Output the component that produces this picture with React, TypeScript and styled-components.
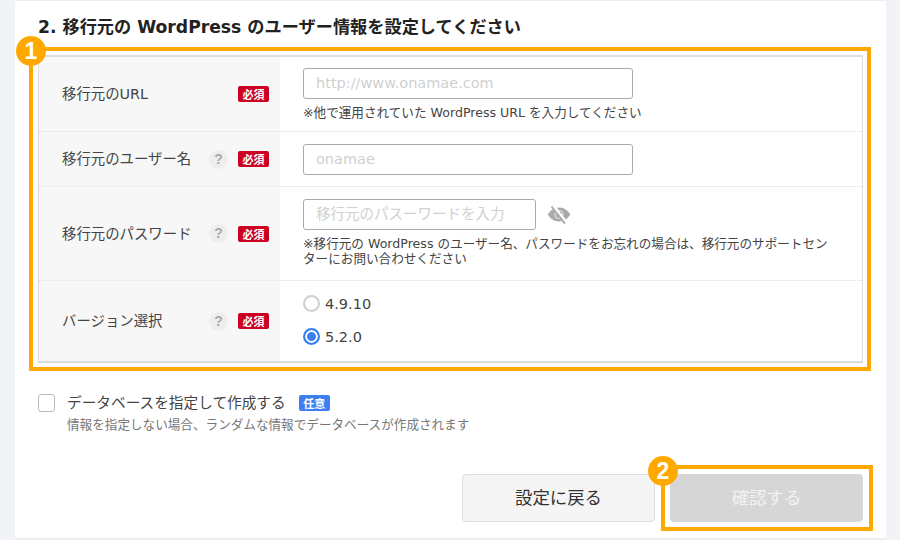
import React from 'react';
import styled, { createGlobalStyle } from 'styled-components';

const orange = '#ffa800';

const GlobalStyle = createGlobalStyle`
  html, body {
    margin: 0;
    padding: 0;
    background: #f1f3f7;
  }
  body {
    font-family: "DejaVu Sans", "Noto Sans CJK JP", sans-serif;
    color: #333;
  }
  * {
    box-sizing: border-box;
  }
`;

const Panel = styled.main`
  width: 871px;
  height: 540px;
  margin-left: 15px;
  padding: 14px 15px 0 14px;
  background: #fff;
  border-top: 1px solid #eeeeee;
  border-bottom: 2px solid #eeeeee;
`;

const Heading = styled.h2`
  margin: 0 0 8px 9px;
  font-size: 17.2px;
  line-height: 24px;
  font-weight: 700;
  color: #222;
`;

const Highlight = styled.div`
  position: relative;
  border: 4px solid ${orange};
`;

const FormFrame = styled(Highlight)`
  width: 842px;
  padding: 4px 4px 4px 5px;
`;

const StepBadge = styled.span<{ $left: number; $top: number }>`
  position: absolute;
  left: ${p => p.$left}px;
  top: ${p => p.$top}px;
  width: 30px;
  height: 30px;
  border-radius: 50%;
  background: ${orange};
  color: #fff;
  font: 700 23px/30px "Liberation Sans", sans-serif;
  text-align: center;
`;

const Table = styled.div`
  border: 1px solid #dddddd;
  border-top-width: 2px;
  border-bottom-width: 2px;
`;

const Row = styled.div<{ $height: number }>`
  display: grid;
  grid-template-columns: 241px 1fr;
  height: ${p => p.$height}px;
  border-bottom: 1px dotted #d9d9d9;

  &:last-child {
    border-bottom: 0;
  }
`;

const LabelCell = styled.div`
  display: flex;
  align-items: center;
  padding: 0 11px 0 23px;
  background: #f7f7f7;
`;

const LabelText = styled.span`
  flex: 1;
  padding-bottom: 3px;
  font-size: 14.4px;
  color: #444;
`;

const Help = styled.span`
  width: 19px;
  height: 19px;
  margin-right: 10px;
  border-radius: 50%;
  background: #eeeeee;
  color: #aaa;
  font: 700 14px/19px "Liberation Sans", sans-serif;
  text-align: center;
`;

const Required = styled.span`
  width: 31px;
  height: 16px;
  border-radius: 2px;
  background: #cc0022;
  color: #fff;
  font: 700 11px/16px "Noto Sans CJK JP", sans-serif;
  text-align: center;
`;

const FieldCell = styled.div<{ $top: number }>`
  padding: ${p => p.$top}px 30px 0 23px;
`;

const InputLine = styled.div`
  display: flex;
  align-items: center;
  gap: 11px;
`;

const TextInput = styled.input<{ $width: number }>`
  display: block;
  width: ${p => p.$width}px;
  height: 31px;
  padding: 0 12px 2px;
  background: #fff;
  border: 1px solid #aaa;
  border-radius: 3px;
  font: 14.5px "DejaVu Sans", "Noto Sans CJK JP", sans-serif;
  outline: none;

  &::placeholder {
    color: #d0d0d0;
    opacity: 1;
  }
`;

const Note = styled.p`
  margin: 6px 0 0;
  font-size: 12.6px;
  line-height: 15px;
  color: #444;
`;

const RadioLine = styled.label`
  display: flex;
  align-items: center;
  gap: 5px;
  height: 17px;
  font-size: 14.5px;
  color: #444;

  & + & {
    margin-top: 16px;
  }
`;

const RadioMark = styled.span<{ $on?: boolean }>`
  display: block;
  width: 17px;
  height: 17px;
  border-radius: 50%;
  border: ${p => (p.$on ? '2px solid #3b7ff0' : '2px solid #cfcfcf')};
  background: ${p => (p.$on ? '#3b7ff0' : '#fff')};
  box-shadow: ${p => (p.$on ? 'inset 0 0 0 2px #fff' : 'none')};
`;

const OptionRow = styled.div`
  display: flex;
  gap: 12px;
  margin: 23px 0 0 9px;
`;

const CheckBox = styled.span`
  width: 17px;
  height: 18px;
  border: 1px solid #bbb;
  border-radius: 3px;
  background: #fff;
`;

const OptionBody = styled.div`
  display: flex;
  flex-direction: column;
`;

const OptionLabel = styled.div`
  display: flex;
  align-items: center;
  gap: 13px;
  height: 18px;
  font-size: 14.67px;
  color: #444;
`;

const OptionText = styled.span`
  padding-bottom: 4px;
`;

const Optional = styled.span`
  width: 31px;
  height: 16px;
  border-radius: 2px;
  background: #3b7ff0;
  color: #fff;
  font: 700 11px/16px "Noto Sans CJK JP", sans-serif;
  text-align: center;
`;

const OptionHint = styled.p`
  margin: 5px 0 0;
  font-size: 12.6px;
  line-height: 16px;
  color: #777;
`;

const Actions = styled.div`
  display: flex;
  justify-content: flex-end;
  align-items: center;
  gap: 6px;
  margin-top: 32px;
`;

const Button = styled.button<{ $disabled?: boolean }>`
  display: block;
  width: 193px;
  height: 48px;
  padding: 0 0 3px;
  border-radius: 4px;
  border: 1px solid ${p => (p.$disabled ? '#d6d6d6' : '#dddddd')};
  background: ${p => (p.$disabled ? '#d6d6d6' : '#f5f5f5')};
  color: ${p => (p.$disabled ? '#f2f2f2' : '#333')};
  font: 400 17.4px "DejaVu Sans", "Noto Sans CJK JP", sans-serif;
`;

const ButtonFrame = styled(Highlight)`
  padding: 5px 6px 5px 5px;
  margin-right: -2px;
`;

// filled eye with a slash through it, same as the show/hide toggle on the original
const EyeOff = () => (
  <svg width="24" height="19" viewBox="0 0 24 19" style={{ display: 'block' }}>
    <path
      d="M12 2.5C6.6 2.5 2.6 6 .8 9.5 2.6 13 6.6 16.5 12 16.5s9.4-3.5 11.2-7C21.4 6 17.4 2.5 12 2.5z"
      fill="#aaaaaa"
    />
    <circle cx="12" cy="9.5" r="4" fill="none" stroke="#e2e2e2" strokeWidth="1.2" />
    <path d="M5.5 .5L19 18" stroke="#fff" strokeWidth="4" />
    <path d="M4.5 1.5L18 18.5" stroke="#aaaaaa" strokeWidth="2" />
  </svg>
);

const rows = [
  { label: '移行元のURL', height: 75 },
  { label: '移行元のユーザー名', height: 55 },
  { label: '移行元のパスワード', height: 94 },
];

export default function App() {
  return (
    <>
      <GlobalStyle />
      <Panel>
        <Heading>2. 移行元の WordPress のユーザー情報を設定してください</Heading>

        <FormFrame>
          <StepBadge $left={-17} $top={-15}>1</StepBadge>
          <Table>
            <Row $height={rows[0].height}>
              <LabelCell>
                <LabelText>{rows[0].label}</LabelText>
                <Required>必須</Required>
              </LabelCell>
              <FieldCell $top={11}>
                <TextInput $width={330} placeholder="http://www.onamae.com" />
                <Note>※他で運用されていた WordPress URL を入力してください</Note>
              </FieldCell>
            </Row>
            <Row $height={rows[1].height}>
              <LabelCell>
                <LabelText>{rows[1].label}</LabelText>
                <Help>?</Help>
                <Required>必須</Required>
              </LabelCell>
              <FieldCell $top={12}>
                <TextInput $width={330} placeholder="onamae" />
              </FieldCell>
            </Row>
            <Row $height={rows[2].height}>
              <LabelCell>
                <LabelText>{rows[2].label}</LabelText>
                <Help>?</Help>
                <Required>必須</Required>
              </LabelCell>
              <FieldCell $top={12}>
                <InputLine>
                  <TextInput $width={233} placeholder="移行元のパスーワードを入力" />
                  <EyeOff />
                </InputLine>
                <Note>
                  ※移行元の WordPress のユーザー名、パスワードをお忘れの場合は、移行元のサポートセンターにお問い合わせください
                </Note>
              </FieldCell>
            </Row>
            <Row $height={80}>
              <LabelCell>
                <LabelText>バージョン選択</LabelText>
                <Help>?</Help>
                <Required>必須</Required>
              </LabelCell>
              <FieldCell $top={14}>
                <RadioLine><RadioMark />4.9.10</RadioLine>
                <RadioLine><RadioMark $on />5.2.0</RadioLine>
              </FieldCell>
            </Row>
          </Table>
        </FormFrame>

        <OptionRow>
          <CheckBox />
          <OptionBody>
            <OptionLabel>
              <OptionText>データベースを指定して作成する</OptionText>
              <Optional>任意</Optional>
            </OptionLabel>
            <OptionHint>情報を指定しない場合、ランダムな情報でデータベースが作成されます</OptionHint>
          </OptionBody>
        </OptionRow>

        <Actions>
          <Button>設定に戻る</Button>
          <ButtonFrame>
            <StepBadge $left={-17} $top={-13}>2</StepBadge>
            <Button $disabled>確認する</Button>
          </ButtonFrame>
        </Actions>
      </Panel>
    </>
  );
}
